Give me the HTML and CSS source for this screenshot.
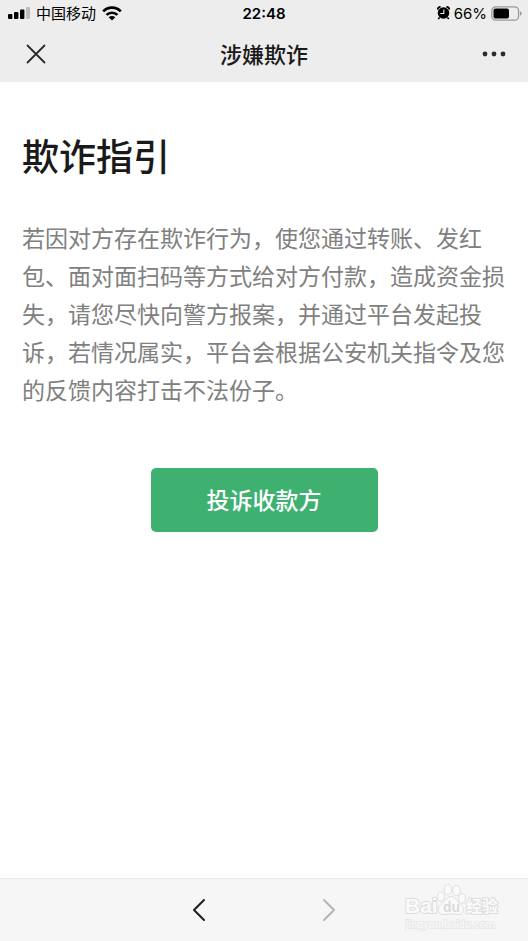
FILE: index.html
```html
<!DOCTYPE html>
<html lang="zh-CN">
<head>
<meta charset="utf-8">
<meta name="viewport" content="width=device-width, initial-scale=1">
<title>涉嫌欺诈</title>
<link rel="stylesheet" href="styles.css">
</head>
<body>
<header class="top">
  <div class="status">
    <div class="status-left">
      <svg width="22" height="12" viewBox="0 0 22 12" aria-hidden="true">
        <rect x="0" y="7" width="4.4" height="5" rx="1"/>
        <rect x="6" y="5" width="4.4" height="7" rx="1"/>
        <rect x="12" y="2.5" width="4.4" height="9.5" rx="1"/>
        <rect x="18" y="0" width="4" height="12" rx="1" fill="#bdbdbd"/>
      </svg>
      <span class="carrier">中国移动</span>
      <svg width="20" height="15" viewBox="0 0 20 15" aria-hidden="true">
        <g fill="none" stroke="#000" stroke-width="2.6">
          <path d="M1.2 5.4C6.2.4 13.8.4 18.8 5.4"/>
          <path d="M4.5 8.9C7.5 6 12.5 6 15.5 8.9"/>
        </g>
        <path d="M6.7 11.2C8.6 9.5 11.4 9.5 13.3 11.2L10 14.6Z"/>
      </svg>
    </div>
    <time class="clock">22:48</time>
    <div class="status-right">
      <svg width="13" height="14" viewBox="0 0 13 14" aria-hidden="true">
        <circle cx="6.5" cy="7" r="5.8"/>
        <path d="M.6 3.6A3 3 0 0 1 3.6.8M9.4.8A3 3 0 0 1 12.4 3.6M2.6 11.5L1.2 13M10.4 11.5L11.8 13" fill="none" stroke="#000" stroke-width="1.7"/>
        <path d="M6.8 3.6V7.5H3.3" fill="none" stroke="#ededed" stroke-width="1.1"/>
      </svg>
      <span class="percent">66%</span>
      <svg width="31" height="15" viewBox="0 0 31 15" aria-hidden="true">
        <rect x=".8" y=".8" width="26.8" height="13.4" rx="4" fill="none" stroke="#999" stroke-width="1.3"/>
        <rect x="2.5" y="2.5" width="15.5" height="10" rx="2"/>
        <path d="M29 5.2Q30.8 6 30.8 7.5T29 9.8Z" fill="#999"/>
      </svg>
    </div>
  </div>
  <nav class="titlebar">
    <button class="icon-button close" type="button" aria-label="关闭">
      <svg width="20" height="20" viewBox="0 0 20 20"><path d="M1.5 1.5L18.5 18.5M18.5 1.5L1.5 18.5" fill="none" stroke="#2b2b2b" stroke-width="1.8" stroke-linecap="round"/></svg>
    </button>
    <span class="page-title">涉嫌欺诈</span>
    <button class="icon-button more" type="button" aria-label="更多">
      <svg width="24" height="6" viewBox="0 0 24 6" fill="#2b2b2b"><circle cx="3" cy="3" r="2.4"/><circle cx="12" cy="3" r="2.4"/><circle cx="21" cy="3" r="2.4"/></svg>
    </button>
  </nav>
</header>
<main class="content">
  <h1>欺诈指引</h1>
  <p>若因对方存在欺诈行为，使您通过转账、发红包、面对面扫码等方式给对方付款，造成资金损失，请您尽快向警方报案，并通过平台发起投诉，若情况属实，平台会根据公安机关指令及您的反馈内容打击不法份子。</p>
  <button class="primary" type="button">投诉收款方</button>
</main>
<footer class="bottom">
  <button class="icon-button" type="button" aria-label="后退">
    <svg width="14" height="24" viewBox="0 0 14 24"><path d="M12 2L2 12L12 22" fill="none" stroke="#1f1f1f" stroke-width="2" stroke-linecap="round" stroke-linejoin="round"/></svg>
  </button>
  <button class="icon-button" type="button" aria-label="前进" disabled>
    <svg width="14" height="24" viewBox="0 0 14 24"><path d="M2 2L12 12L2 22" fill="none" stroke="#b5b5b5" stroke-width="2" stroke-linecap="round" stroke-linejoin="round"/></svg>
  </button>
  <div class="watermark">
    <svg width="98" height="50" viewBox="0 0 98 50" role="img" aria-label="Baidu 经验">
      <g class="mark">
        <text x="0" y="30" font-size="21">Bai</text>
        <text x="61" y="29" font-size="16">经验</text>
      </g>
      <g class="paw">
        <ellipse cx="36" cy="13.5" rx="3.4" ry="4.6"/>
        <ellipse cx="43" cy="6.5" rx="3.8" ry="5.2"/>
        <ellipse cx="51.5" cy="7.5" rx="3.8" ry="5.2"/>
        <ellipse cx="57" cy="15.5" rx="3.4" ry="4.6"/>
        <path d="M46.500 13.500C51 13.500 52 18.500 55.500 21.500C61 26 58.500 32 53 31.500C48.500 30.700 44.500 30.700 40 31.500C33.500 32.500 31 26 36 21.500C40 18 41.500 13.500 46.500 13.500Z"/>
      </g>
      <text class="du" x="38" y="29" font-size="14">du</text>
      <text class="site" x="1" y="45" font-size="11">jingyan.baidu.com</text>
    </svg>
  </div>
</footer>
</body>
</html>
```
FILE: styles.css
```css
* {
  box-sizing: border-box;
}

body {
  margin: 0;
  min-height: 100vh;
  display: flex;
  flex-direction: column;
  background: #fff;
  color: #1a1a1a;
  font-family: "Noto Sans CJK SC", sans-serif;
}

button {
  border: 0;
  padding: 0;
  font: inherit;
}

svg {
  display: block;
}

.top {
  background: #ededed;
}

.status {
  display: grid;
  grid-template-columns: 1fr auto 1fr;
  align-items: center;
  height: 26px;
  padding: 0 6px;
  color: #000;
}

.status-left,
.status-right {
  display: flex;
  align-items: center;
  gap: 6px;
}

.status-left {
  padding-left: 2px;
}

.status-right {
  justify-content: flex-end;
  gap: 4px;
}

.carrier {
  font-size: 15px;
  line-height: 26px;
}

.clock,
.percent {
  font-family: Inter, sans-serif;
  font-size: 15px;
}

.clock {
  font-weight: 600;
}

.titlebar {
  display: grid;
  grid-template-columns: 1fr auto 1fr;
  align-items: center;
  height: 56px;
  padding: 0 22px;
}

.page-title {
  font-size: 22px;
  line-height: 32px;
  padding-bottom: 2px;
  font-weight: 500;
}

.icon-button {
  display: flex;
  background: none;
}

.close {
  padding-left: 4px;
}

.more {
  justify-self: end;
}

.content {
  flex: 1;
  display: flex;
  flex-direction: column;
  padding: 46px 22px;
}

h1 {
  margin: 0;
  font-size: 37px;
  line-height: 54px;
  font-weight: 500;
}

p {
  margin: 36px 0 0;
  color: #808080;
  font-size: 23px;
  line-height: 38px;
  font-weight: 400;
}

.primary {
  align-self: center;
  margin-top: 60px;
  padding: 0 56px 2px;
  border-radius: 5px;
  background: #3eb171;
  color: #fff;
  font-size: 23px;
  line-height: 62px;
  font-weight: 500;
}

.bottom {
  position: relative;
  display: flex;
  justify-content: center;
  align-items: center;
  gap: 116px;
  height: 63px;
  border-top: 1px solid #e9e9e9;
  background: #f6f6f6;
}

.watermark {
  position: absolute;
  right: 25px;
  bottom: 8px;
}

.paw {
  fill: #fafafa;
  stroke: #dedede;
  stroke-width: 1px;
}

.mark,
.du {
  fill: #fafafa;
  stroke: #dedede;
  stroke-width: 2px;
  paint-order: stroke;
  font-family: "Liberation Sans", "Noto Sans CJK SC", sans-serif;
  font-weight: 700;
}

.du {
  fill: #dadada;
  stroke: none;
}

.site {
  fill: #fafafa;
  stroke: #e9e9e9;
  stroke-width: 2px;
  paint-order: stroke;
  font-family: "Liberation Sans", sans-serif;
}
```
